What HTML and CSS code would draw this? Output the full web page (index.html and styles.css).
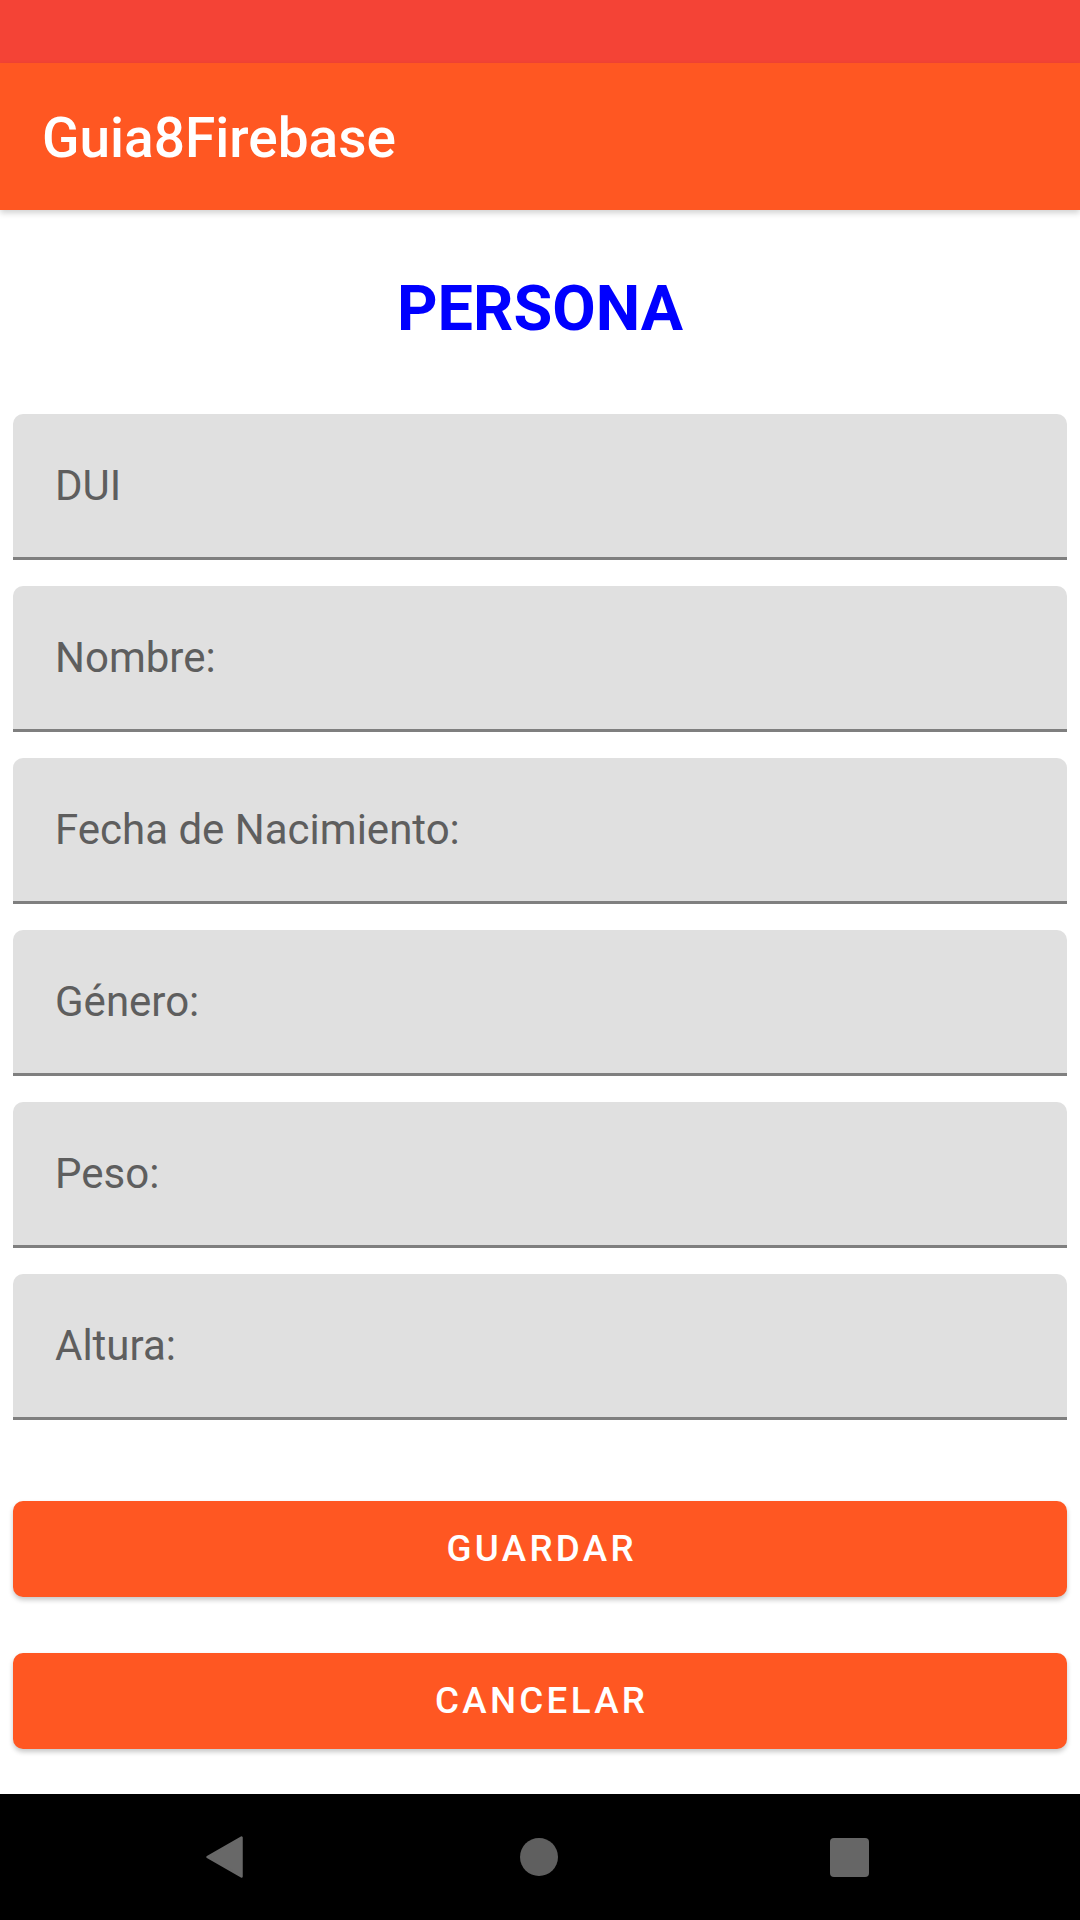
FILE: index.html
```html
<!DOCTYPE html>
<html lang="es">
<head>
<meta charset="utf-8">
<title>Guia8Firebase</title>
<link rel="stylesheet" href="styles.css">
</head>
<body>
<div class="screen">
  <div class="status-bar"></div>
  <header class="app-bar"><span class="app-title">Guia8Firebase</span></header>
  <main class="content">
    <h1 class="page-title">PERSONA</h1>
    <div class="fields">
      <div class="field"><span class="field-label">DUI</span></div>
      <div class="field"><span class="field-label">Nombre:</span></div>
      <div class="field"><span class="field-label">Fecha de Nacimiento:</span></div>
      <div class="field"><span class="field-label">Género:</span></div>
      <div class="field"><span class="field-label">Peso:</span></div>
      <div class="field"><span class="field-label">Altura:</span></div>
    </div>
    <div class="buttons">
      <div class="btn">GUARDAR</div>
      <div class="btn">CANCELAR</div>
    </div>
  </main>
  <nav class="nav-bar">
    <svg class="nav-back" width="37" height="42" viewBox="0 0 37 42"><path d="M35.5 1.5 L35.5 40.5 L1.5 21 Z" fill="#686868" stroke="#686868" stroke-width="2.5" stroke-linejoin="round"/></svg>
    <div class="nav-home"></div>
    <div class="nav-recent"></div>
  </nav>
</div>
</body>
</html>
```
FILE: styles.css
```css
html, body {
  margin: 0;
  padding: 0;
  background: #ffffff;
}
body {
  font-family: Roboto, "Noto Sans", "Liberation Sans", sans-serif;
}
.screen {
  width: 1080px;
  height: 1920px;
  display: flex;
  flex-direction: column;
  overflow: hidden;
}
.status-bar {
  height: 63px;
  background: #F44336;
  flex: none;
}
.app-bar {
  height: 147px;
  background: #FF5722;
  flex: none;
  display: flex;
  align-items: center;
  padding: 4px 0 0 42px;
  box-sizing: border-box;
  box-shadow: 0 3px 6px rgba(0, 0, 0, 0.18);
  position: relative;
  z-index: 2;
}
.app-title {
  color: #ffffff;
  font-size: 55px;
  font-weight: 500;
  line-height: 1;
}
.content {
  flex: 1;
  display: flex;
  flex-direction: column;
  padding: 0 13px;
}
.page-title {
  margin: 67px 0 74px;
  font-size: 63px;
  line-height: 63px;
  font-weight: 700;
  color: #0000FF;
  text-align: center;
}
.fields {
  display: flex;
  flex-direction: column;
  gap: 26px;
}
.field {
  height: 143px;
  background: #E0E0E0;
  border-bottom: 3px solid #7F7F7F;
  border-radius: 10px 10px 0 0;
  display: flex;
  align-items: center;
  padding-left: 42px;
}
.field-label {
  font-size: 42px;
  line-height: 50px;
  color: #5E5E5E;
}
.buttons {
  margin-top: 81px;
  display: flex;
  flex-direction: column;
  gap: 56px;
}
.btn {
  height: 96px;
  background: #FF5722;
  border-radius: 10px;
  box-shadow: 0 3px 5px rgba(0, 0, 0, 0.22);
  color: #ffffff;
  font-size: 36.75px;
  font-weight: 500;
  letter-spacing: 3.3px;
  padding-left: 3.3px;
  display: flex;
  align-items: center;
  justify-content: center;
  line-height: 1;
}
.nav-bar {
  height: 126px;
  background: #000000;
  flex: none;
  display: flex;
  align-items: center;
  padding-left: 206px;
}
.nav-back {
  display: block;
}
.nav-home {
  width: 38px;
  height: 38px;
  border-radius: 50%;
  background: #5F5F5F;
  margin-left: 277px;
}
.nav-recent {
  width: 39px;
  height: 39px;
  border-radius: 4px;
  background: #666666;
  margin-left: 272px;
}
```
